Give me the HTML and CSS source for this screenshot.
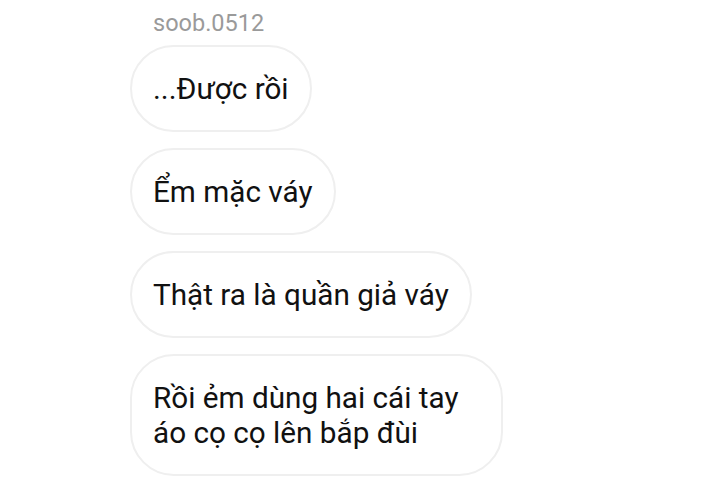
FILE: index.html
```html
<!DOCTYPE html>
<html lang="vi">
	<head>
		<meta charset="UTF-8" />
		<meta name="viewport" content="width=device-width, initial-scale=1.0" />
		<title>soob.0512</title>
		<link rel="stylesheet" href="styles.css">
	</head>
	<body>
		<section class="thread">
			<p class="sender">soob.0512</p>
			<div class="messages">
				<div class="bubble">...Được rồi</div>
				<div class="bubble">Ểm mặc váy</div>
				<div class="bubble">Thật ra là quần giả váy</div>
				<div class="bubble">Rồi ẻm dùng hai cái tay áo cọ cọ lên bắp đùi</div>
			</div>
		</section>
	</body>
</html>
```

FILE: styles.css
```css
body {
	margin: 0;
	background-color: #fff;
	font-family: Roboto, "Noto Sans", sans-serif;
	color: #111;
}

.thread {
	display: flex;
	flex-direction: column;
	padding: 8px 0 0 130px;
}

.sender {
	margin: 0 0 7px 23px;
	font-size: 23.5px;
	line-height: 30px;
	color: #9a9a9a;
}

.messages {
	display: flex;
	flex-direction: column;
	align-items: flex-start;
	gap: 16px;
}

.bubble {
	box-sizing: border-box;
	max-width: 373px;
	padding: 24px 21px;
	font-size: 29.7px;
	line-height: 35px;
	border: 2px solid #efefef;
	border-radius: 44px;
	background-color: #fff;
}
```
